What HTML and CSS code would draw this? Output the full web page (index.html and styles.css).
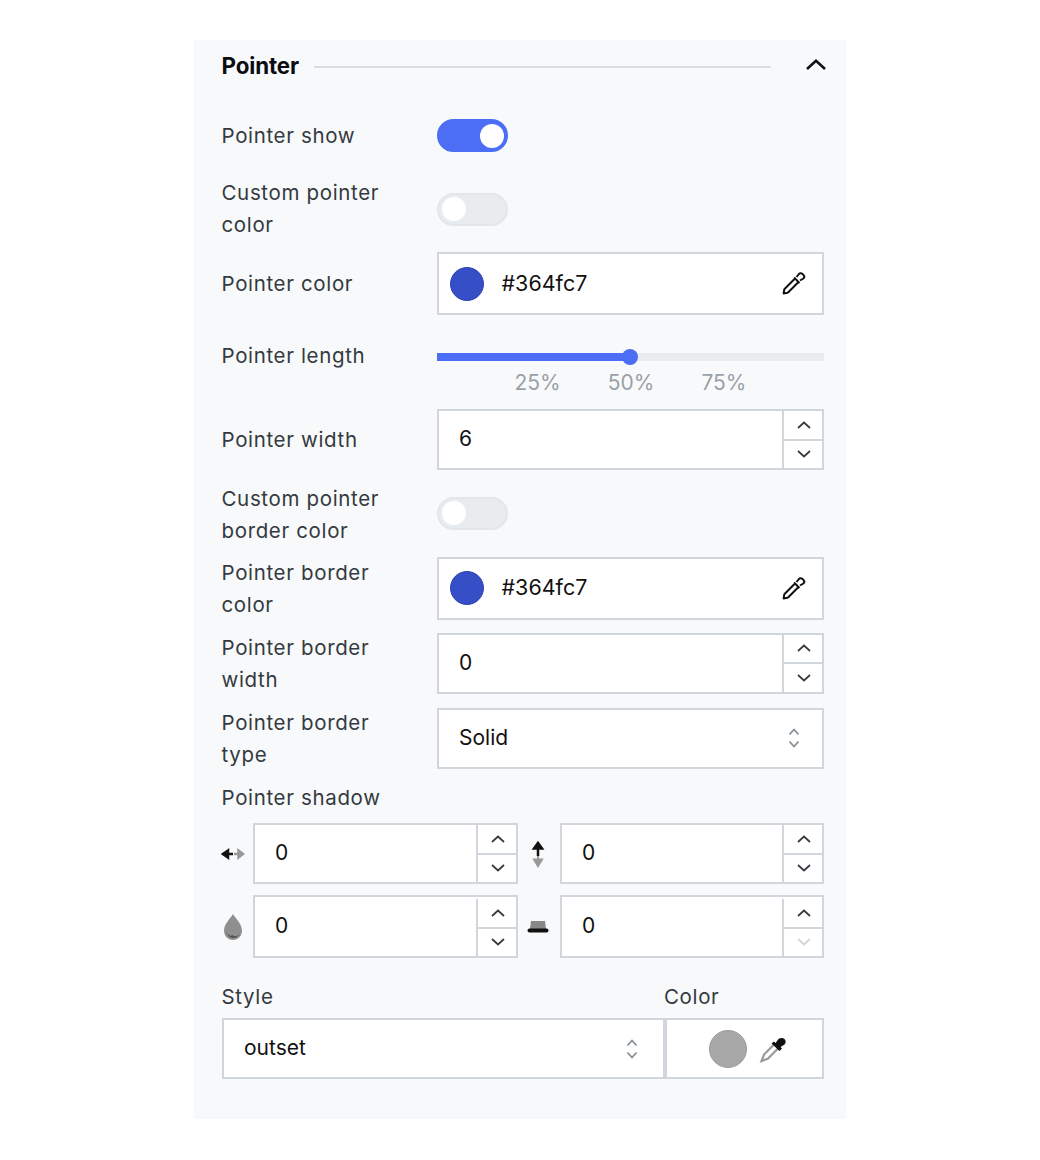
FILE: index.html
```html
<!DOCTYPE html>
<html lang="en">
<head>
<meta charset="utf-8">
<title>Pointer</title>
<link rel="stylesheet" href="styles.css">
</head>
<body>
<svg class="defs" width="0" height="0" aria-hidden="true">
  <symbol id="up" viewBox="0 0 16 10"><path d="M2 8l6-5.5L14 8" fill="none" stroke="currentColor" stroke-width="1.7"/></symbol>
  <symbol id="down" viewBox="0 0 16 10"><path d="M2 2l6 5.5L14 2" fill="none" stroke="currentColor" stroke-width="1.7"/></symbol>
  <symbol id="updown" viewBox="0 0 14 22"><path d="M2.500 7.500L7 2.500l4.500 5M2.500 14.500L7 19.500l4.500-5" fill="none" stroke="#868e96" stroke-width="1.800"/></symbol>
  <symbol id="pen" viewBox="0 0 25 25"><path d="M14 7.500L3.800 17.700c-.3.3-.5.7-.6 1.100L2.600 22.400 6.200 21.800c.4-.1.8-.3 1.100-.6L17.500 11zM13 6.500l5.500 5.500M15.500 6l2.400-3c.9-1 2.400-1.100 3.400-.2l1.300 1.300c.9 1 .8 2.500-.2 3.400L19 9.500" fill="none" stroke="#111" stroke-width="2" stroke-linejoin="round"/></symbol>
</svg>
<main class="panel">
  <header class="head">
    <h2 class="title">Pointer</h2>
    <span class="rule"></span>
    <svg class="collapse" width="24" height="15"><use href="#up"/></svg>
  </header>

  <div class="row row-show">
    <span class="label">Pointer show</span>
    <span class="toggle on"><i></i></span>
  </div>
  <div class="row row-custom">
    <span class="label">Custom pointer color</span>
    <span class="toggle"><i></i></span>
  </div>
  <div class="row row-color">
    <span class="label">Pointer color</span>
    <div class="box colorbox">
      <span class="swatch"></span><span class="val">#364fc7</span>
      <svg class="pen" width="25" height="25"><use href="#pen"/></svg>
    </div>
  </div>
  <div class="row row-length">
    <span class="label">Pointer length</span>
    <div class="slider">
      <div class="track"><div class="fill"></div><span class="thumb"></span></div>
      <div class="ticks"><span>25%</span><span>50%</span><span>75%</span></div>
    </div>
  </div>
  <div class="row row-width">
    <span class="label">Pointer width</span>
    <div class="box num">
      <span class="val">6</span>
      <div class="spin"><span><svg width="16" height="10"><use href="#up"/></svg></span><span><svg width="16" height="10"><use href="#down"/></svg></span></div>
    </div>
  </div>
  <div class="row row-cb">
    <span class="label">Custom pointer border color</span>
    <span class="toggle"><i></i></span>
  </div>
  <div class="row row-two">
    <span class="label">Pointer border color</span>
    <div class="box colorbox">
      <span class="swatch"></span><span class="val">#364fc7</span>
      <svg class="pen" width="25" height="25"><use href="#pen"/></svg>
    </div>
  </div>
  <div class="row row-two">
    <span class="label">Pointer border width</span>
    <div class="box num">
      <span class="val">0</span>
      <div class="spin"><span><svg width="16" height="10"><use href="#up"/></svg></span><span><svg width="16" height="10"><use href="#down"/></svg></span></div>
    </div>
  </div>
  <div class="row row-two">
    <span class="label">Pointer border type</span>
    <div class="box selectbox">
      <span class="val">Solid</span>
      <svg width="14" height="22"><use href="#updown"/></svg>
    </div>
  </div>

  <div class="label shadow-label">Pointer shadow</div>
  <div class="shadow-grid">
    <svg class="sico" width="24" height="24" viewBox="0 0 24 24"><path d="M13 12h8M17.500 8.500L22 12l-4.500 3.500z" stroke="#999" stroke-width="2.500" fill="#999"/><path d="M12 12H3M7 8.500L2 12l5 3.500z" stroke="#111" stroke-width="2.500" fill="#111"/></svg>
    <div class="box num"><span class="val">0</span><div class="spin"><span><svg width="16" height="10"><use href="#up"/></svg></span><span><svg width="16" height="10"><use href="#down"/></svg></span></div></div>
    <svg class="sico mid" width="24" height="28" viewBox="0 0 24 28"><path d="M12 13v8M8 19.500L12 26l4-6.500z" stroke="#999" stroke-width="2" fill="#999"/><path d="M12 5v11M8 8.500L12 3l4 5.500z" stroke="#111" stroke-width="2.500" fill="#111"/></svg>
    <div class="box num"><span class="val">0</span><div class="spin"><span><svg width="16" height="10"><use href="#up"/></svg></span><span><svg width="16" height="10"><use href="#down"/></svg></span></div></div>
    <svg class="sico" width="24" height="30" viewBox="0 0 24 30"><path d="M12 2C9 7 3 12 3 18.500 3 24 7 28 12 28s9-4 9-9.500C21 12 15 7 12 2z" fill="#8f8f8f"/><path d="M5 20c1 3 3 5 6 6 3 .5 6-1 8-4-2 2-5 3-8 1l-1 1c-2-1-4-2-5-4z" fill="#555"/></svg>
    <div class="box num tall"><span class="val">0</span><div class="spin split"><span><svg width="16" height="10"><use href="#up"/></svg></span><span><svg width="16" height="10"><use href="#down"/></svg></span></div></div>
    <svg class="sico mid" width="24" height="14" viewBox="0 0 24 14"><path d="M5 1h14l1 8H4z" fill="#888"/><rect x="1.500" y="8.500" width="21" height="4" rx="2" fill="#111"/></svg>
    <div class="box num tall"><span class="val">0</span><div class="spin split muted"><span><svg width="16" height="10"><use href="#up"/></svg></span><span><svg width="16" height="10"><use href="#down"/></svg></span></div></div>
  </div>

  <div class="style-head"><span class="label style-l">Style</span><span class="label">Color</span></div>
  <div class="style-row">
    <div class="box selectbox style-sel">
      <span class="val">outset</span>
      <svg width="14" height="22"><use href="#updown"/></svg>
    </div>
    <div class="box pick">
      <span class="greydot"></span>
      <svg width="28" height="28" viewBox="0 0 28 28"><path d="M15 9.500L5 19.500 2.500 26l6.500-2.500L19 13.500" fill="#fff" stroke="#999" stroke-width="2.200"/><path d="M12.500 8.500l2.500-2 1.500 1.500 3-4c1.500-1.500 4.500-1.500 6 0s1.500 4 0 5.500L21.500 12 23 13.500l-2.500 2.500z" fill="#111"/></svg>
    </div>
  </div>
</main>
</body>
</html>
```

FILE: styles.css
```css
html, body { margin: 0; padding: 0; background: #fff; }
body {
  width: 1040px; height: 1160px; overflow: hidden;
  font-family: "Inter", "Liberation Sans", sans-serif;
  color: #111;
}
.defs { position: absolute; }
.panel {
  box-sizing: border-box;
  width: 652px; height: 1079px;
  margin: 40px 0 0 194px;
  padding: 10px 22px 0 28px;
  background: #f8f9fb;
}
.head { display: flex; align-items: center; height: 30px; }
.title {
  margin: 0 0 0 -0.5px; font-family: "Inter", sans-serif; font-size: 22.300px; font-weight: 700;
  letter-spacing: -0.1px; color: #0b0d10; width: 92.500px; flex: none;
}
.rule { flex: none; width: 457px; height: 2px; margin-top: 3px; background: #d9dde2; }
.collapse { flex: none; margin-left: 33px; margin-top: -2px; color: #111; }
.label {
  font-family: "Inter", sans-serif;
  font-size: 20.500px; line-height: 32px; color: #343a40;
  letter-spacing: 0.65px; margin-left: -0.5px;
}
.row { display: grid; grid-template-columns: 215px 387px; align-items: center; }
.row > .label { max-width: 180px; }
.row-show { margin-top: 39px; height: 33px; }
.row-custom { margin-top: 25px; height: 64px; }
.row-color { margin-top: 11px; height: 63px; }
.row-length { margin-top: 25px; align-items: start; }
.row-width { margin-top: 12px; }
.row-cb { margin-top: 11px; height: 64px; grid-template-rows: 64px; }
.row-two { margin-top: 11px; height: 64px; grid-template-rows: 64px; }
.row-two .label { margin-top: 2px; }
.row-cb .label { margin-top: 4px; }
.toggle {
  box-sizing: border-box; width: 71px; height: 33px; border-radius: 17px;
  background: #e9ecef; border: 2px solid #e3e6ea; display: flex; align-items: center; padding-left: 3px;
}
.toggle i { width: 24px; height: 24px; border-radius: 50%; background: #fff; }
.toggle.on { background: #4c6ef5; border-color: #4c6ef5; justify-content: flex-end; padding: 0 2px 0 0; }
.box {
  box-sizing: border-box; border: 2px solid #d1d6dd; background: #fff;
  display: flex; align-items: center; font-size: 21px; height: 61px;
}
.colorbox { height: 63px; padding: 0 16px 0 11px; }
.colorbox .val { font-size: 21.500px; margin-left: -0.5px; }
.swatch { width: 34px; height: 34px; border-radius: 50%; background: #364fc7; border: 1px solid #2f45ad; box-sizing: border-box; margin-right: 18px; }
.pen { margin-left: auto; }
.val { color: #111; margin-bottom: 2px; }
.num { padding-left: 20px; justify-content: space-between; }
.spin { box-sizing: border-box; align-self: stretch; width: 40px; border-left: 2px solid #d1d6dd; display: flex; flex-direction: column; color: #343a40; }
.spin span { flex: 1; display: flex; align-items: center; justify-content: center; padding-left: 1px; }
.spin span + span { border-top: 2px solid #d1d6dd; }
.spin.split { margin-top: 2px; }
.spin.muted span + span { color: #ced4da; }
.selectbox { padding: 0 21px 0 20px; justify-content: space-between; }
.slider { margin-top: 13px; }
.track { position: relative; height: 8px; background: #e9ecef; }
.fill { width: 193px; height: 8px; background: #4c6ef5; }
.thumb { position: absolute; left: 185px; top: -4px; width: 16px; height: 16px; border-radius: 50%; background: #4c6ef5; }
.ticks { display: flex; justify-content: center; gap: 47px; margin-top: 8px; font-size: 21px; line-height: 28px; color: #9aa1a9; }
.shadow-label { margin-top: 12px; }
.shadow-grid {
  display: grid; grid-template-columns: 31px 265px 42px 264px;
  grid-template-rows: 61px 63px; row-gap: 11px; align-items: center; margin-top: 9px;
}
.shadow-grid .tall { height: 63px; }
.sico { justify-self: start; margin-left: -1px; }
.sico.mid { justify-self: center; margin: 0 0 0 -2px; }
.style-head { display: flex; margin-top: 23px; }
.style-l { width: 443px; }
.style-row { display: flex; margin-top: 5px; }
.style-sel { width: 443px; padding-right: 24px; }
.pick { width: 159px; border-left-width: 2px; justify-content: center; gap: 12px; padding-left: 6px; }
.greydot { width: 38px; height: 38px; border-radius: 50%; background: #a8a8a8; border: 1px solid #999; box-sizing: border-box; }
```
